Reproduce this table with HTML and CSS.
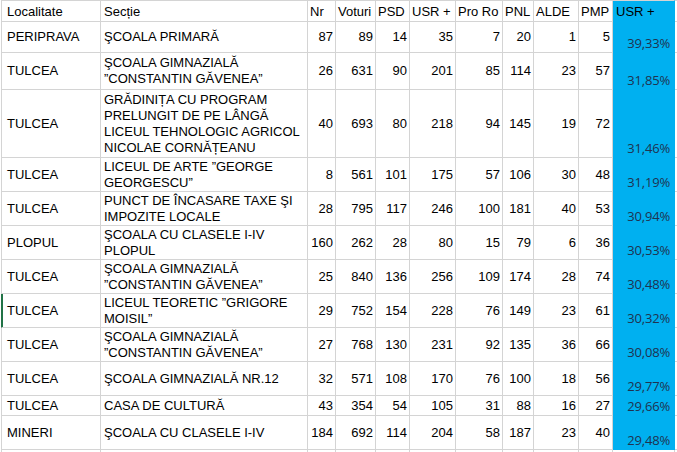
FILE: index.html
```html
<!DOCTYPE html>
<html lang="ro">
<head>
<meta charset="utf-8">
<title>Rezultate</title>
<link rel="stylesheet" href="styles.css">
</head>
<body>
<div class="sheet">
  <div class="c h first">Localitate</div><div class="c h t2">Secție</div><div class="c h">Nr</div><div class="c h">Voturi</div><div class="c h">PSD</div><div class="c h">USR +</div><div class="c h">Pro Ro</div><div class="c h">PNL</div><div class="c h">ALDE</div><div class="c h">PMP</div><div class="c h blue">USR +</div><div class="c h rest"></div>

  <div class="c t first">PERIPRAVA</div><div class="c t t2">ŞCOALA PRIMARĂ</div><div class="c n">87</div><div class="c n">89</div><div class="c n">14</div><div class="c n">35</div><div class="c n">7</div><div class="c n">20</div><div class="c n">1</div><div class="c n">5</div><div class="c p blue">39,33%</div><div class="c rest"></div>

  <div class="c t first">TULCEA</div><div class="c t t2">ŞCOALA GIMNAZIALĂ ”CONSTANTIN GĂVENEA”</div><div class="c n">26</div><div class="c n">631</div><div class="c n">90</div><div class="c n">201</div><div class="c n">85</div><div class="c n">114</div><div class="c n">23</div><div class="c n">57</div><div class="c p blue">31,85%</div><div class="c rest"></div>

  <div class="c t first">TULCEA</div><div class="c t t2">GRĂDINIȚA CU PROGRAM PRELUNGIT DE PE LÂNGĂ LICEUL TEHNOLOGIC AGRICOL NICOLAE CORNĂȚEANU</div><div class="c n">40</div><div class="c n">693</div><div class="c n">80</div><div class="c n">218</div><div class="c n">94</div><div class="c n">145</div><div class="c n">19</div><div class="c n">72</div><div class="c p blue">31,46%</div><div class="c rest"></div>

  <div class="c t first">TULCEA</div><div class="c t t2">LICEUL DE ARTE ”GEORGE GEORGESCU”</div><div class="c n">8</div><div class="c n">561</div><div class="c n">101</div><div class="c n">175</div><div class="c n">57</div><div class="c n">106</div><div class="c n">30</div><div class="c n">48</div><div class="c p blue">31,19%</div><div class="c rest"></div>

  <div class="c t first">TULCEA</div><div class="c t t2">PUNCT DE ÎNCASARE TAXE ŞI IMPOZITE LOCALE</div><div class="c n">28</div><div class="c n">795</div><div class="c n">117</div><div class="c n">246</div><div class="c n">100</div><div class="c n">181</div><div class="c n">40</div><div class="c n">53</div><div class="c p blue">30,94%</div><div class="c rest"></div>

  <div class="c t first">PLOPUL</div><div class="c t t2">ŞCOALA CU CLASELE I-IV PLOPUL</div><div class="c n">160</div><div class="c n">262</div><div class="c n">28</div><div class="c n">80</div><div class="c n">15</div><div class="c n">79</div><div class="c n">6</div><div class="c n">36</div><div class="c p blue">30,53%</div><div class="c rest"></div>

  <div class="c t first">TULCEA</div><div class="c t t2">ŞCOALA GIMNAZIALĂ ”CONSTANTIN GĂVENEA”</div><div class="c n">25</div><div class="c n">840</div><div class="c n">136</div><div class="c n">256</div><div class="c n">109</div><div class="c n">174</div><div class="c n">28</div><div class="c n">74</div><div class="c p blue">30,48%</div><div class="c rest"></div>

  <div class="c t first sel">TULCEA</div><div class="c t t2">LICEUL TEORETIC ”GRIGORE MOISIL”</div><div class="c n">29</div><div class="c n">752</div><div class="c n">154</div><div class="c n">228</div><div class="c n">76</div><div class="c n">149</div><div class="c n">23</div><div class="c n">61</div><div class="c p blue">30,32%</div><div class="c rest"></div>

  <div class="c t first">TULCEA</div><div class="c t t2">ŞCOALA GIMNAZIALĂ ”CONSTANTIN GĂVENEA”</div><div class="c n">27</div><div class="c n">768</div><div class="c n">130</div><div class="c n">231</div><div class="c n">92</div><div class="c n">135</div><div class="c n">36</div><div class="c n">66</div><div class="c p blue">30,08%</div><div class="c rest"></div>

  <div class="c t first">TULCEA</div><div class="c t t2">ŞCOALA GIMNAZIALĂ NR.12</div><div class="c n">32</div><div class="c n">571</div><div class="c n">108</div><div class="c n">170</div><div class="c n">76</div><div class="c n">100</div><div class="c n">18</div><div class="c n">56</div><div class="c p blue">29,77%</div><div class="c rest"></div>

  <div class="c t first">TULCEA</div><div class="c t t2">CASA DE CULTURĂ</div><div class="c n">43</div><div class="c n">354</div><div class="c n">54</div><div class="c n">105</div><div class="c n">31</div><div class="c n">88</div><div class="c n">16</div><div class="c n">27</div><div class="c p blue">29,66%</div><div class="c rest"></div>

  <div class="c t first">MINERI</div><div class="c t t2">ŞCOALA CU CLASELE I-IV</div><div class="c n">184</div><div class="c n">692</div><div class="c n">114</div><div class="c n">204</div><div class="c n">58</div><div class="c n">187</div><div class="c n">23</div><div class="c n">40</div><div class="c p blue">29,48%</div><div class="c rest"></div>

  <div class="c first"></div><div class="c"></div><div class="c"></div><div class="c"></div><div class="c"></div><div class="c"></div><div class="c"></div><div class="c"></div><div class="c"></div><div class="c"></div><div class="c"></div><div class="c rest"></div>
</div>
</body>
</html>
```

FILE: styles.css
```css
* { box-sizing: border-box; }

html, body {
  margin: 0;
  padding: 0;
  background: #ffffff;
  overflow: hidden;
}

body {
  font-family: "Liberation Sans", Arial, sans-serif;
  font-size: 13px;
  color: #000;
}

.sheet {
  display: grid;
  margin-left: 1px;
  grid-template-columns: 100px 207px 28px 40px 34px 46px 47px 31px 45px 34px 62px 3px;
  grid-template-rows: 22px 31px 37px 68px 34px 34px 34px 34px 34px 34px 34px 20px 34px 20px;
}

.c {
  border-right: 1px solid #d4d4d4;
  border-bottom: 1px solid #d4d4d4;
  display: flex;
  align-items: center;
  line-height: 16px;
  white-space: nowrap;
  overflow: hidden;
}

.first {
  border-left: 1px solid #d4d4d4;
  padding-left: 5px;
}

.sel {
  border-left-color: #217346;
  box-shadow: inset 1px 0 0 #217346;
}

.h {
  border-top: 1px solid #d4d4d4;
  padding-left: 2px;
  padding-top: 1px;
}

.h.first {
  padding-left: 5px;
}

.t2 {
  padding-left: 3px;
  white-space: normal;
}

.t {
  white-space: normal;
}

.t.t2 {
  padding-right: 6px;
}

.n {
  justify-content: flex-end;
  padding-right: 2px;
}

.blue {
  background: #00b0f0;
  border-right-color: #00b0f0;
  border-bottom-color: #00b0f0;
}

.h.blue {
  border-top-color: #d4d4d4;
  padding-left: 3px;
}

.p {
  align-items: flex-end;
  justify-content: flex-end;
  padding-right: 4px;
  padding-bottom: 1px;
  font-family: "Open Sans", "Noto Sans", sans-serif;
  font-size: 13px;
  letter-spacing: -0.2px;
  color: #1f3350;
}

.rest {
  border-right: none;
}
```
